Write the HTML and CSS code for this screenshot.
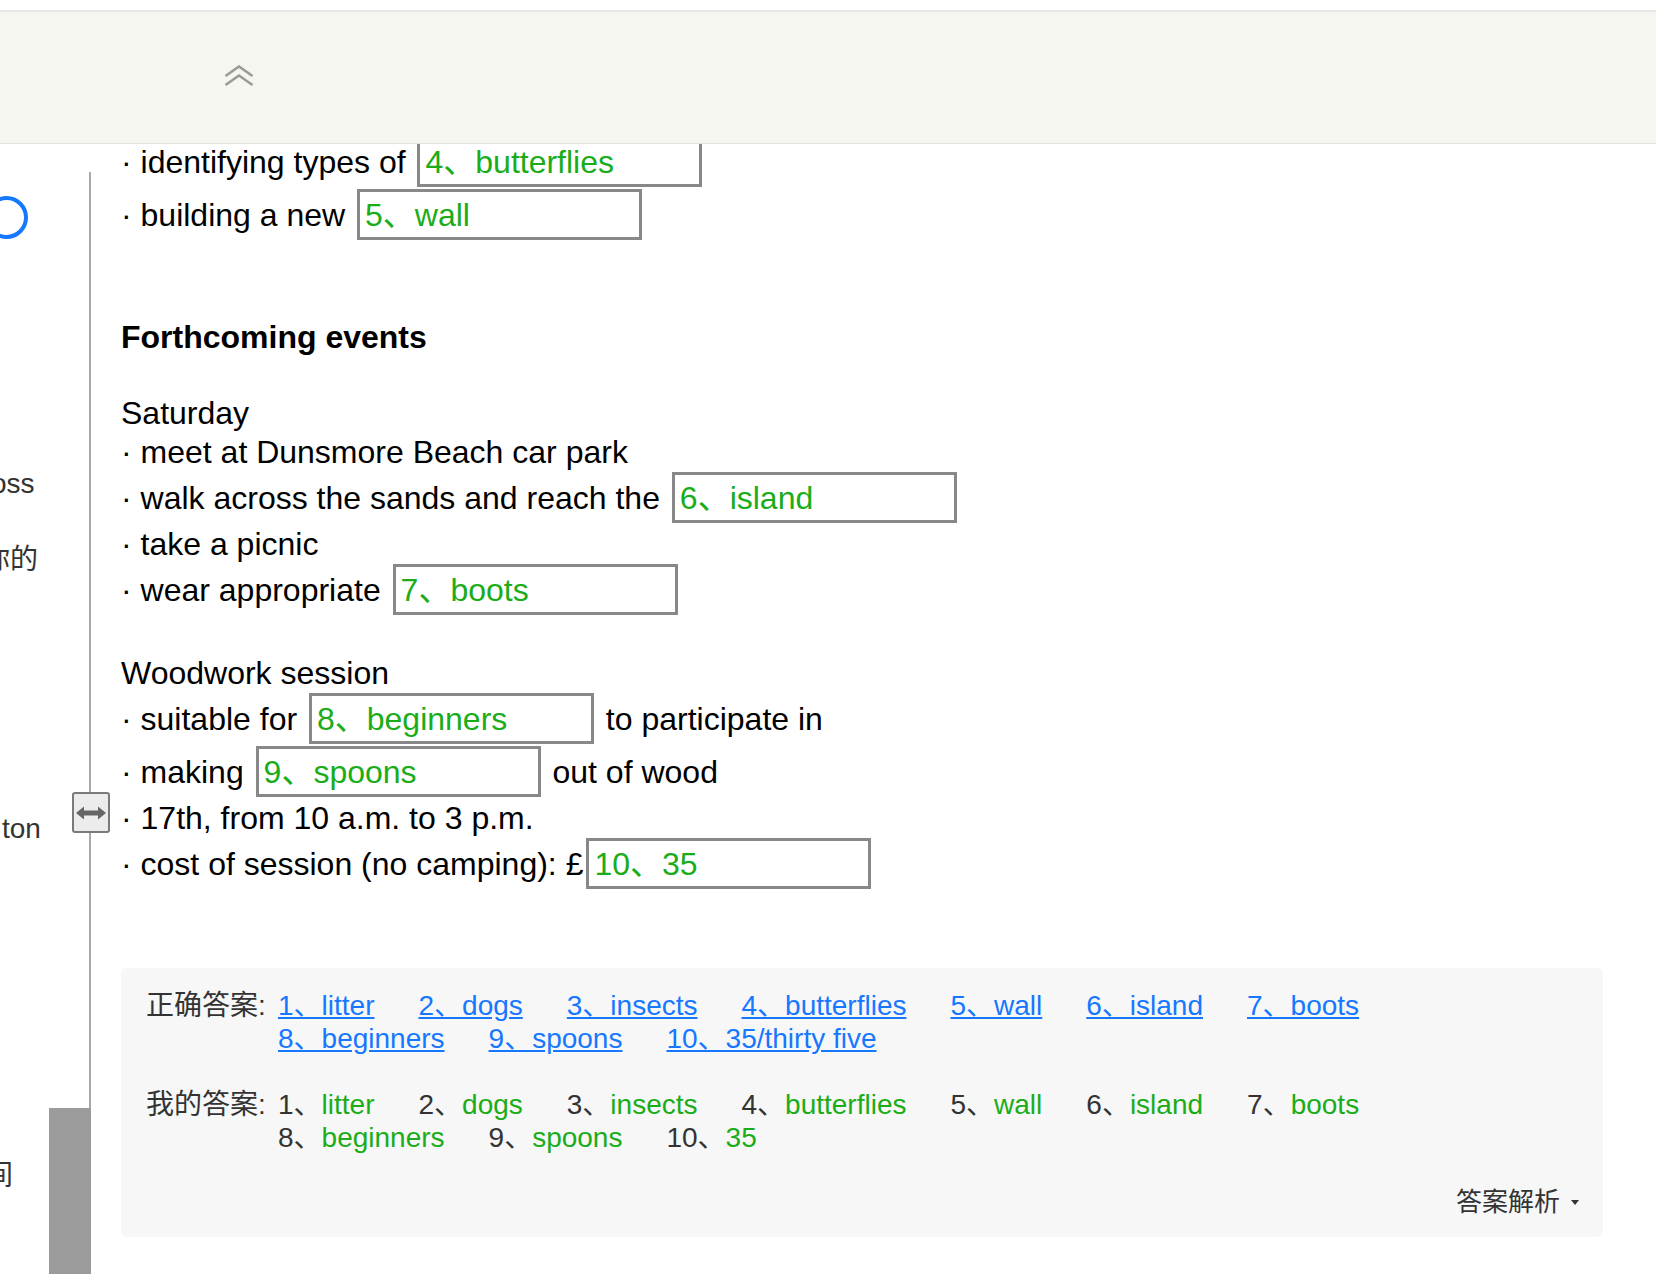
FILE: index.html
```html
<!DOCTYPE html>
<html lang="zh-CN">
<head>
<meta charset="utf-8">
<title>Forthcoming events</title>
<link rel="stylesheet" href="styles.css">
</head>
<body>
<div class="page">
  <aside class="side">
    <div class="side-text">
      <span class="radio"></span>
      <span class="frag frag-oss">oss</span>
      <span class="frag frag-ni">你的</span>
      <span class="frag frag-ton">ton</span>
      <span class="frag frag-jian">间</span>
    </div>
    <div class="rail">
      <div class="rail-line"></div>
      <div class="rail-thumb"></div>
      <div class="handle">
        <svg width="30" height="14" viewBox="0 0 30 14"><path d="M0 7 L8 0.5 L8 4.5 L22 4.5 L22 0.5 L30 7 L22 13.5 L22 9.5 L8 9.5 L8 13.5 Z" fill="#666"/></svg>
      </div>
    </div>
  </aside>

  <main class="content">
    <div class="para">
      <div class="ln box-ln"><span class="t">· identifying types of </span><span class="blank">4、butterflies</span></div>
      <div class="ln box-ln"><span class="t">· building a new </span><span class="blank">5、wall</span></div>
    </div>

    <div class="ln heading">Forthcoming events</div>

    <div class="para sec">
      <div class="ln"><span class="t">Saturday</span></div>
      <div class="ln"><span class="t">· meet at Dunsmore Beach car park</span></div>
      <div class="ln box-ln"><span class="t">· walk across the sands and reach the </span><span class="blank">6、island</span></div>
      <div class="ln"><span class="t">· take a picnic</span></div>
      <div class="ln box-ln"><span class="t">· wear appropriate </span><span class="blank">7、boots</span></div>
    </div>

    <div class="para sec">
      <div class="ln"><span class="t">Woodwork session</span></div>
      <div class="ln box-ln"><span class="t">· suitable for </span><span class="blank">8、beginners</span><span class="t"> to participate in</span></div>
      <div class="ln box-ln"><span class="t">· making </span><span class="blank">9、spoons</span><span class="t"> out of wood</span></div>
      <div class="ln"><span class="t">· 17th, from 10 a.m. to 3 p.m.</span></div>
      <div class="ln box-ln"><span class="t">· cost of session (no camping): £</span><span class="blank">10、35</span></div>
    </div>

    <section class="panel">
      <div class="ans-row">
        <span class="ans-label">正确答案:</span>
        <div class="ans-items">
          <a class="ans-link" href="#">1、litter</a>
          <a class="ans-link" href="#">2、dogs</a>
          <a class="ans-link" href="#">3、insects</a>
          <a class="ans-link" href="#">4、butterflies</a>
          <a class="ans-link" href="#">5、wall</a>
          <a class="ans-link" href="#">6、island</a>
          <a class="ans-link" href="#">7、boots</a>
          <a class="ans-link" href="#">8、beginners</a>
          <a class="ans-link" href="#">9、spoons</a>
          <a class="ans-link" href="#">10、35/thirty five</a>
        </div>
      </div>
      <div class="ans-row">
        <span class="ans-label">我的答案:</span>
        <div class="ans-items">
          <span class="mine">1、<em class="ok">litter</em></span>
          <span class="mine">2、<em class="ok">dogs</em></span>
          <span class="mine">3、<em class="ok">insects</em></span>
          <span class="mine">4、<em class="ok">butterflies</em></span>
          <span class="mine">5、<em class="ok">wall</em></span>
          <span class="mine">6、<em class="ok">island</em></span>
          <span class="mine">7、<em class="ok">boots</em></span>
          <span class="mine">8、<em class="ok">beginners</em></span>
          <span class="mine">9、<em class="ok">spoons</em></span>
          <span class="mine">10、<em class="ok">35</em></span>
        </div>
      </div>
      <div class="analysis"><span>答案解析</span><i class="caret"></i></div>
    </section>
  </main>

  <header class="topbar">
    <svg class="chev" width="30" height="22" viewBox="0 0 30 22"><path d="M1.5 11 L15 1.5 L28.5 11 M1.5 20 L15 10.5 L28.5 20" fill="none" stroke="#9a9a9a" stroke-width="2.6"/></svg>
  </header>
</div>
</body>
</html>
```

FILE: styles.css
```css
html, body {
  margin: 0;
  padding: 0;
  background: #fff;
}
body {
  width: 1656px;
  height: 1274px;
  overflow: hidden;
  font-family: "Liberation Sans", "Noto Sans CJK SC", sans-serif;
}
.page {
  position: relative;
  display: flex;
  height: 1274px;
}

/* ---------- left (clipped) side panel ---------- */
.side {
  flex: none;
  display: flex;
  width: 91px;
}
.side-text {
  width: 49px;
  display: flex;
  flex-direction: column;
  align-items: flex-start;
  color: #333;
  font-size: 28px;
  line-height: 40px;
  white-space: nowrap;
}
.radio {
  display: block;
  width: 35px;
  height: 35px;
  border: 4px solid #1677ff;
  border-radius: 50%;
  margin-top: 196px;
  margin-left: -15px;
}
.frag { display: block; }
.frag-oss { margin-top: 225px; margin-left: -9px; }
.frag-ni { margin-top: 36px; margin-left: -18px; }
.frag-ton { margin-top: 229px; margin-left: 2px; }
.frag-jian { margin-top: 307px; margin-left: -15px; }

.rail {
  position: relative;
  width: 42px;
  height: 1274px;
  box-sizing: border-box;
  padding-top: 172px;
  display: flex;
  flex-direction: column;
}
.rail-line {
  flex: 1;
  border-right: 2px solid #a8a8a8;
}
.rail-thumb {
  height: 166px;
  background: #9b9b9b;
}
.handle {
  position: absolute;
  left: 23px;
  top: 792px;
  width: 38px;
  height: 41px;
  box-sizing: border-box;
  border: 2px solid #7a7a7a;
  border-radius: 3px;
  background: #ececec;
  display: flex;
  align-items: center;
  justify-content: center;
}

/* ---------- main content ---------- */
.content {
  flex: none;
  width: 1482px;
  padding: 135px 0 0 30px;
  color: #000;
  font-size: 32px;
  line-height: 38px;
}
.ln {
  display: flex;
  align-items: center;
  height: 39px;
  white-space: pre;
}
.box-ln { height: 53px; }
.t { white-space: pre; }
.heading {
  margin-top: 76px;
  font-weight: bold;
}
.sec { margin-top: 37px; }
.blank {
  box-sizing: border-box;
  width: 285px;
  height: 51px;
  margin: 0 3px;
  border: 3px solid #888;
  padding-left: 5px;
  color: #1aad19;
  line-height: 38px;
  display: flex;
  align-items: center;
  background: #fff;
}

/* ---------- answers panel ---------- */
.panel {
  margin-top: 78px;
  background: #f7f7f7;
  border-radius: 6px;
  padding: 21px 24px 18px 25px;
  font-size: 28px;
  line-height: 33px;
  color: #333;
}
.ans-row { display: flex; }
.ans-row + .ans-row { margin-top: 33px; }
.ans-label {
  flex: none;
  width: 132px;
}
.ans-items {
  display: flex;
  flex-wrap: wrap;
  column-gap: 44px;
  width: 1150px;
}
.ans-link {
  color: #1677ff;
  text-decoration: underline;
  white-space: nowrap;
}
.mine { white-space: nowrap; }
.ok {
  font-style: normal;
  color: #1aad19;
}
.analysis {
  display: flex;
  justify-content: flex-end;
  align-items: center;
  margin-top: 32px;
  font-size: 26px;
}
.caret {
  margin-left: 11px;
  width: 0;
  height: 0;
  border-left: 4px solid transparent;
  border-right: 4px solid transparent;
  border-top: 5px solid #333;
}

/* ---------- top bar overlay ---------- */
.topbar {
  position: absolute;
  top: 10px;
  left: 0;
  width: 1656px;
  height: 134px;
  box-sizing: border-box;
  border-top: 2px solid #e8e8e8;
  border-bottom: 1px solid #e3e3e3;
  background: #f6f6f0;
  display: flex;
  align-items: center;
  padding-left: 224px;
}
.chev { display: block; margin-top: -3px; }
```
